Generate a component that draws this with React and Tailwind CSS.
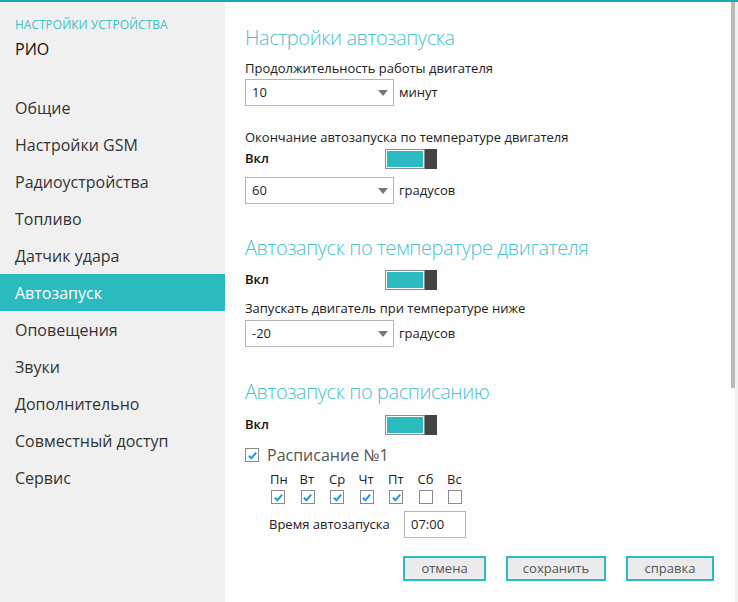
import React from "react";

const font = { fontFamily: '"Open Sans", "Noto Sans", sans-serif' };

const navItems = [
  "Общие",
  "Настройки GSM",
  "Радиоустройства",
  "Топливо",
  "Датчик удара",
  "Автозапуск",
  "Оповещения",
  "Звуки",
  "Дополнительно",
  "Совместный доступ",
  "Сервис",
];

function Check({ on }) {
  return (
    <div className="w-[14px] h-[14px] border border-[#8a8a8a] bg-white flex items-center justify-center">
      {on && (
        <svg viewBox="0 0 12 12" className="w-[11px] h-[11px]">
          <path d="M2 6.2 L4.8 9 L10 2.8" fill="none" stroke="#1e9be0" strokeWidth="2.2" />
        </svg>
      )}
    </div>
  );
}

function Toggle() {
  return (
    <div className="flex h-[20px]">
      <div className="w-[40px] h-[20px] border border-[#8c8c8c] p-[1px] bg-white">
        <div className="w-full h-full bg-[#2bbbbe]" />
      </div>
      <div className="w-[12px] h-[20px] bg-[#444]" />
    </div>
  );
}

function Select({ value, unit }) {
  return (
    <div className="flex items-center gap-[5px]">
      <div className="w-[149px] h-[27px] border border-[#b5b5b5] bg-white flex items-center justify-between pl-[6px] pr-[5px]">
        <span className="text-[13px] text-[#222]">{value}</span>
        <svg viewBox="0 0 10 6" className="w-[10px] h-[6px]">
          <path d="M0 0 L10 0 L5 6 Z" fill="#777" />
        </svg>
      </div>
      <span className="text-[13px] text-[#222]">{unit}</span>
    </div>
  );
}

function SwitchRow() {
  return (
    <div className="flex items-center h-[20px]">
      <span className="w-[140px] text-[13px] font-semibold text-[#111]">Вкл</span>
      <Toggle />
    </div>
  );
}

function Heading({ children }) {
  return (
    <h2 className="text-[20px] font-light tracking-[-0.4px] text-[#4cc3ca] leading-[28px]">{children}</h2>
  );
}

function Btn({ children, w }) {
  return (
    <button className={`h-[25px] border-2 border-[#2bbbbe] bg-[#ebebeb] text-[13px] text-[#555] ${w}`}>
      {children}
    </button>
  );
}

export default function App() {
  const days = [
    ["Пн", true],
    ["Вт", true],
    ["Ср", true],
    ["Чт", true],
    ["Пт", true],
    ["Сб", false],
    ["Вс", false],
  ];
  return (
    <div style={font} className="w-[738px] h-[602px] flex flex-col bg-[#fdfdfd] overflow-hidden">
      <div className="h-[2px] bg-[#17a9b1]" />
      <div className="flex flex-1">
        <aside className="w-[225px] bg-[#f0f0f0] flex flex-col">
          <div className="pl-[15px] pt-[15px]">
            <div className="text-[12px] text-[#3fbfc8] leading-[16px]">НАСТРОЙКИ УСТРОЙСТВА</div>
            <div className="text-[16px] text-[#111] mt-[5px] leading-[22px]">РИО</div>
          </div>
          <nav className="mt-[29px] flex flex-col">
            {navItems.map((n) => (
              <div
                key={n}
                className={`h-[37px] flex items-center pl-[15px] text-[16px] ${
                  n === "Автозапуск" ? "bg-[#2bbbbe] text-white" : "text-[#333]"
                }`}
              >
                {n}
              </div>
            ))}
          </nav>
        </aside>
        <main className="flex-1 pl-[20px] pt-[22px] flex flex-col">
          <Heading>Настройки автозапуска</Heading>
          <div className="text-[13px] text-[#222] mt-[7px] leading-[18px]">Продолжительность работы двигателя</div>
          <div className="mt-[2px]">
            <Select value="10" unit="минут" />
          </div>
          <div className="text-[13px] text-[#222] mt-[22px] leading-[18px]">Окончание автозапуска по температуре двигателя</div>
          <div className="mt-[3px]">
            <SwitchRow />
          </div>
          <div className="mt-[8px]">
            <Select value="60" unit="градусов" />
          </div>
          <div className="mt-[30px]">
            <Heading>Автозапуск по температуре двигателя</Heading>
          </div>
          <div className="mt-[8px]">
            <SwitchRow />
          </div>
          <div className="text-[13px] text-[#222] mt-[9px] leading-[18px]">Запускать двигатель при температуре ниже</div>
          <div className="mt-[3px]">
            <Select value="-20" unit="градусов" />
          </div>
          <div className="mt-[31px]">
            <Heading>Автозапуск по расписанию</Heading>
          </div>
          <div className="mt-[9px]">
            <SwitchRow />
          </div>
          <div className="mt-[9px] flex items-center gap-[8px]">
            <Check on />
            <span className="text-[16px] text-[#555] leading-[22px]">Расписание №1</span>
          </div>
          <div className="pl-[25px] mt-[4px] flex gap-0">
            {days.map(([d, on]) => (
              <div key={d} className="w-[29.5px] flex flex-col items-start">
                <span className="text-[13px] text-[#222] leading-[18px]">{d}</span>
                <div className="ml-[1px] mt-[2px]">
                  <Check on={on} />
                </div>
              </div>
            ))}
          </div>
          <div className="pl-[24px] mt-[7px] flex items-center">
            <span className="w-[135px] text-[13px] text-[#222]">Время автозапуска</span>
            <div className="w-[62px] h-[27px] border border-[#b5b5b5] bg-white flex items-center pl-[6px] text-[13px] text-[#222]">
              07:00
            </div>
          </div>
          <div className="mt-[18px] flex pl-[158px] gap-[20px]">
            <Btn w="w-[83px]">отмена</Btn>
            <Btn w="w-[100px]">сохранить</Btn>
            <Btn w="w-[88px]">справка</Btn>
          </div>
        </main>
        <div className="w-[4px] flex flex-col">
          <div className="h-[386px] bg-[#bdbab5]" />
        </div>
        <div className="w-[3px] bg-[#f0f0f0]" />
      </div>
    </div>
  );
}
